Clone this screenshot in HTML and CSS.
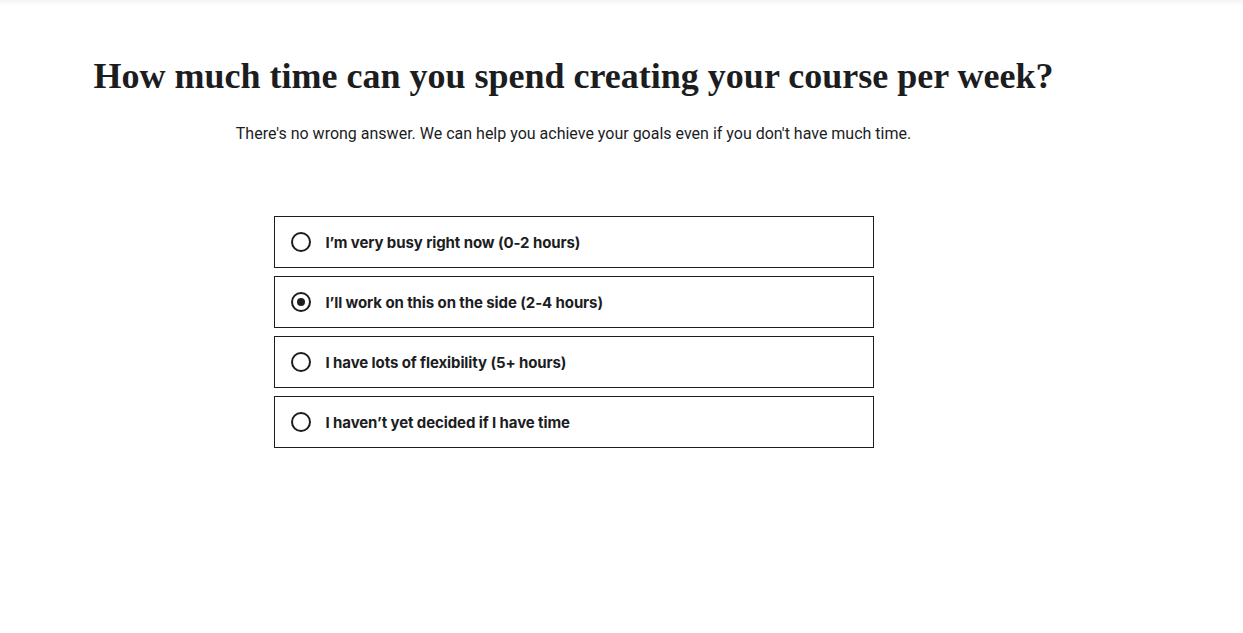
FILE: index.html
```html
<!DOCTYPE html>
<html lang="en">
<head>
<meta charset="utf-8">
<title>Course time</title>
<link rel="stylesheet" href="styles.css">
</head>
<body>
<div class="topbar"></div>
<main class="page">
  <h1 class="title">How much time can you spend creating your course per week?</h1>
  <p class="subtitle">There's no wrong answer. We can help you achieve your goals even if you don't have much time.</p>
  <div class="options">
    <label class="option"><span class="radio"></span><span class="label">I’m very busy right now (0-2 hours)</span></label>
    <label class="option"><span class="radio checked"></span><span class="label">I’ll work on this on the side (2-4 hours)</span></label>
    <label class="option"><span class="radio"></span><span class="label">I have lots of flexibility (5+ hours)</span></label>
    <label class="option"><span class="radio"></span><span class="label">I haven’t yet decided if I have time</span></label>
  </div>
</main>
</body>
</html>
```

FILE: styles.css
```css
html, body {
  margin: 0;
  padding: 0;
  background: #fff;
  color: #1c1d1f;
}
.topbar {
  height: 6px;
  background: linear-gradient(#f4f4f4, #fff);
}
.page {
  width: 1147px;
  display: flex;
  flex-direction: column;
  align-items: center;
}
.title {
  margin: 48px 0 0;
  font-family: "Liberation Serif", serif;
  font-weight: 700;
  font-size: 36px;
  line-height: 44px;
  letter-spacing: 0;
}
.subtitle {
  margin: 25px 0 0;
  font-family: "Roboto", sans-serif;
  font-size: 16px;
  line-height: 22px;
}
.options {
  margin-top: 71px;
  display: flex;
  flex-direction: column;
  gap: 8px;
  width: 600px;
}
.option {
  box-sizing: border-box;
  height: 52px;
  border: 1px solid #1c1d1f;
  display: flex;
  align-items: center;
  padding-left: 16px;
  gap: 15px;
  font-family: "Inter", sans-serif;
  font-weight: 700;
  font-size: 15px;
  letter-spacing: -0.1px;
}
.radio {
  box-sizing: border-box;
  width: 20px;
  height: 20px;
  border: 2px solid #1c1d1f;
  border-radius: 50%;
  display: flex;
  align-items: center;
  justify-content: center;
}
.radio.checked::after {
  content: "";
  width: 8px;
  height: 8px;
  border-radius: 50%;
  background: #1c1d1f;
}
```
